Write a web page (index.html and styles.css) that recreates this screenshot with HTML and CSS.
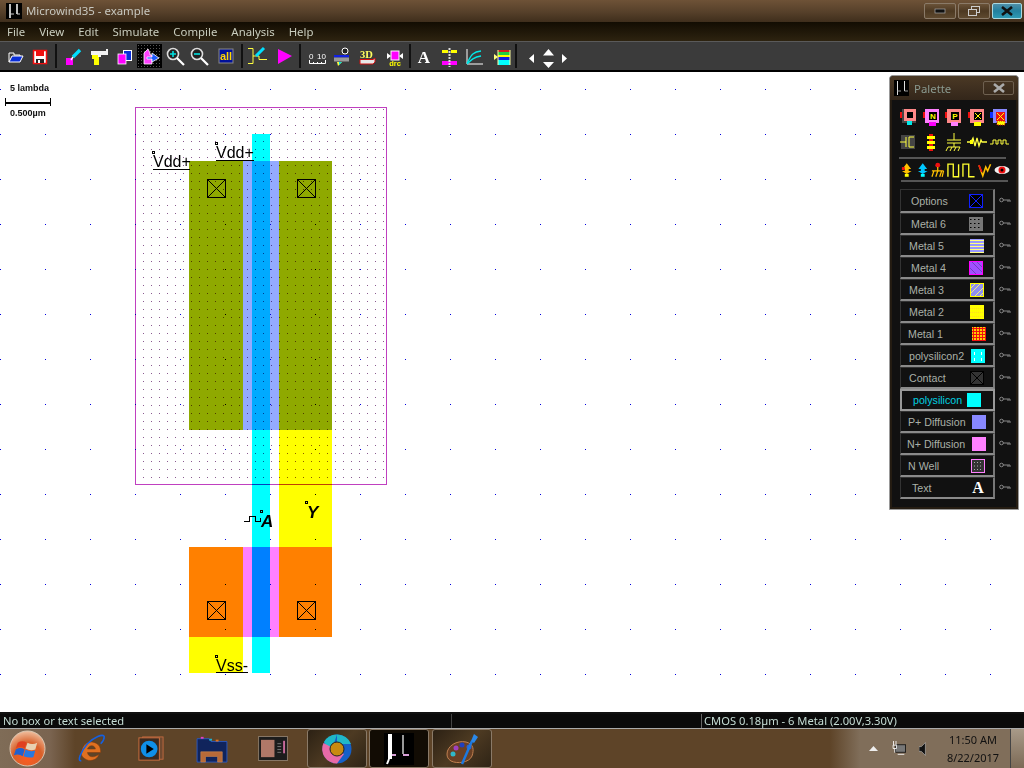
FILE: index.html
```html
<!DOCTYPE html>
<html lang="en">
<head>
<meta charset="utf-8">
<title>Microwind35 - example</title>
<link rel="stylesheet" href="styles.css">
</head>
<body>
<div class="app">
  <header class="titlebar">
    <svg class="mu" width="16" height="16" viewBox="0 0 16 16"><rect width="16" height="16" fill="#000"/><path d="M4 1V15M11 1V11" stroke="#fff" stroke-width="1.5" fill="none"/><path d="M4 11H8M11 11H14" stroke="#ccc" fill="none"/></svg>
    <span class="title-text">Microwind35 - example</span>
    <div class="winbtns">
      <span class="winbtn min"><svg width="12" height="6" viewBox="0 0 12 6"><rect x="1" y="1" width="10" height="4" fill="#111" stroke="#aaa" stroke-width=".7"/></svg></span>
      <span class="winbtn max"><svg width="14" height="12" viewBox="0 0 14 12"><rect x="4.5" y="1.5" width="8" height="6" fill="none" stroke="#ccc"/><rect x="1.5" y="4.5" width="8" height="6" fill="#5a452d" stroke="#ccc"/></svg></span>
      <span class="winbtn close"><svg width="14" height="10" viewBox="0 0 14 10"><path d="M2 1L12 9M12 1L2 9" stroke="#111" stroke-width="2.6"/></svg></span>
    </div>
  </header>
  <nav class="menubar">
    <span>File</span><span>View</span><span>Edit</span><span>Simulate</span><span>Compile</span><span>Analysis</span><span>Help</span>
  </nav>
  <div class="toolbar">
    <span class="tool"><svg viewBox="0 0 24 24"><path d="M6 11V18H17L20 12H9L6 18" fill="#0a2fd8" stroke="#fff"/><path d="M6 11V9H11V11H17V12" fill="none" stroke="#fff"/></svg></span>
    <span class="tool"><svg viewBox="0 0 24 24"><rect x="5.5" y="6.5" width="13" height="13" fill="#fff" stroke="#f01010" stroke-width="1.5"/><rect x="8" y="7" width="8" height="5" fill="#f01010"/><rect x="8" y="15" width="8" height="4" fill="#222"/><rect x="10" y="16" width="2" height="3" fill="#fff"/></svg></span>
    <i class="sep"></i>
    <span class="tool"><svg viewBox="0 0 24 24"><rect x="5" y="14" width="7" height="7" fill="#ff00ff"/><path d="M12 13L19 6" stroke="#00e0ff" stroke-width="3.4"/><path d="M10 16L12 13" stroke="#fff" stroke-width="1.4"/></svg></span>
    <span class="tool"><svg viewBox="0 0 24 24"><path d="M5 7H20V5H22V11H15V13H12V11H5Z" fill="#f2f2f2"/><path d="M6 11H12V13H13V21H8V15H6Z" fill="#ffff00"/></svg></span>
    <span class="tool"><svg viewBox="0 0 24 24"><rect x="11.5" y="6.5" width="8" height="10" fill="#0a2fd8" stroke="#fff"/><rect x="6" y="10" width="8" height="10" fill="#ff00ff" stroke="#fff" stroke-width=".8"/></svg></span>
    <span class="tool active"><svg viewBox="0 0 24 24"><path d="M7 20V9L11 5L13 9V11H15V20Z" fill="#ff40ff" stroke="#fff" stroke-width=".8"/><path d="M10 13H15V9L22 14L15 18V15H10Z" fill="#1f5bff" stroke="#fff" stroke-width=".8"/></svg></span>
    <span class="tool"><svg viewBox="0 0 24 24"><circle cx="10" cy="10" r="5.5" fill="#222" stroke="#ddd" stroke-width="1.6"/><path d="M7 10H13M10 7V13" stroke="#00e0e0" stroke-width="1.6"/><path d="M14 14L21 21" stroke="#fff" stroke-width="2.2"/></svg></span>
    <span class="tool"><svg viewBox="0 0 24 24"><circle cx="9" cy="10" r="5.5" fill="#222" stroke="#ddd" stroke-width="1.6"/><path d="M6 10H12" stroke="#00e0e0" stroke-width="1.6"/><path d="M13 14L20 21" stroke="#fff" stroke-width="2.2"/></svg></span>
    <span class="tool"><svg viewBox="0 0 24 24"><rect x="5" y="5" width="14" height="14" fill="#00109a" stroke="#888"/><text x="12" y="16" class="all">all</text></svg></span>
    <i class="sep"></i>
    <span class="tool"><svg viewBox="0 0 24 24"><path d="M2 4.5H7V19.5H2M7 12H13V15.5H21" stroke="#ffff40" fill="none"/><path d="M10 12L18 4" stroke="#00e0ff" stroke-width="3"/></svg></span>
    <span class="tool"><svg viewBox="0 0 24 24"><path d="M6 5L20 12L6 20Z" fill="#ff00ff"/></svg></span>
    <i class="sep wide"></i>
    <span class="tool"><svg viewBox="0 0 24 24"><text x="3" y="15" class="ruler">0</text><text x="11" y="15" class="ruler">10</text><path d="M3.5 16V19.5H19.5V16M7.500 18V19.500M11.500 18V19.500M15.500 18V19.500" stroke="#fff" fill="none"/></svg></span>
    <span class="tool"><svg viewBox="0 0 24 24"><circle cx="14" cy="7" r="3" fill="#222" stroke="#fff"/><rect x="3" y="11" width="15" height="2.500" fill="#1020e0"/><rect x="3" y="13.500" width="15" height="4" fill="#999"/><path d="M6 18H11L7 22Z" fill="#ffff40"/><path d="M8 18H11L8 21Z" fill="#00e0e0"/></svg></span>
    <span class="tool"><svg viewBox="0 0 24 24"><text x="3" y="14" class="td">3D</text><path d="M3 15.500H16L18 14V18L16 20H3Z" fill="#e8e8e8" stroke="#d01010"/></svg></span>
    <span class="tool"><svg viewBox="0 0 24 24"><rect x="9" y="7" width="8" height="9" fill="#ff00ff" stroke="#fff"/><path d="M5 9L9 12L5 15ZM21 9L17 12L21 15Z" fill="#fff"/><text x="13" y="22" class="drc">drc</text></svg></span>
    <i class="sep flush"></i>
    <span class="tool"><svg viewBox="0 0 24 24"><text x="12" y="19" class="big-a">A</text></svg></span>
    <span class="tool"><svg viewBox="0 0 24 24"><rect x="5" y="6" width="6" height="3" fill="#ffff00"/><rect x="14" y="6" width="6" height="3" fill="#ffff00"/><rect x="5" y="17" width="15" height="4" fill="#ff00ff"/><path d="M12.5 4V23" stroke="#ddd" stroke-width="2" stroke-dasharray="2 1"/></svg></span>
    <span class="tool"><svg viewBox="0 0 24 24"><path d="M4 5V20H20" stroke="#fff" fill="none"/><path d="M4 19C8 12 9 8 18 7M4 20C8 16 11 13 18 12" stroke="#00e8e8" fill="none" stroke-width="1.3"/></svg></span>
    <span class="tool"><svg viewBox="0 0 24 24"><path d="M6 10L10 13L6 16Z" fill="#ffff80"/><rect x="10" y="6" width="12" height="2" fill="#d02020"/><rect x="10" y="8" width="12" height="3" fill="#20d040"/><rect x="10" y="11" width="12" height="2" fill="#ffff00"/><rect x="10" y="13" width="12" height="3" fill="#1020e0"/><rect x="10" y="16" width="12" height="5" fill="#00ffff"/><path d="M10 6V21M22 6V21" stroke="#ffffa0"/></svg></span>
    <i class="sep"></i>
    <span class="nav-arrows"><svg width="48" height="24" viewBox="0 0 48 24"><path d="M10 10V19L5 14.500ZM38 10L43 14.500L38 19ZM24.500 5L30 11.500H19ZM19 18H30L24.500 24Z" fill="#fff"/></svg></span>
  </div>

  <main class="canvas">
    <svg class="layout" width="1024" height="640" viewBox="0 72 1024 640">
      <defs>
        <pattern id="grid" x="0" y="89" width="45" height="45" patternUnits="userSpaceOnUse"><rect width="1" height="1" fill="#0000e0"/></pattern>
        <pattern id="well" x="7" y="5" width="8" height="8" patternUnits="userSpaceOnUse"><rect width="1" height="1" fill="#8a5a90"/></pattern>
        <g id="contact"><rect x=".5" y=".5" width="18" height="18" fill="none" stroke="#000"/><path d="M.5 .5L18.500 18.500M18.500 .5L.5 18.500" stroke="#000" stroke-width="1"/></g>
      </defs>
      <rect x="189" y="161" width="54" height="269" class="pdiff"/>
      <rect x="279" y="161" width="53" height="269" class="pdiff"/>
      <rect x="243" y="161" width="36" height="269" class="lav"/>
      <rect x="279" y="430" width="53" height="117" class="metal"/>
      <rect x="252" y="134" width="18" height="539" class="poly"/>
      <rect x="252" y="161" width="18" height="269" class="gate-p"/>
      <rect x="189" y="547" width="54" height="90" class="ndiff"/>
      <rect x="279" y="547" width="53" height="90" class="ndiff"/>
      <rect x="243" y="547" width="36" height="90" class="pink"/>
      <rect x="252" y="547" width="18" height="90" class="gate-n"/>
      <rect x="189" y="637" width="54" height="36" class="metal"/>
      <rect x="0" y="72" width="1024" height="640" fill="url(#grid)" class="mul"/>
      <rect x="136" y="108" width="250" height="376" fill="url(#well)" class="mul"/>
      <rect x="135.500" y="107.500" width="251" height="377" class="well-edge"/>
      <use href="#contact" x="207" y="179"/><use href="#contact" x="297" y="179"/>
      <use href="#contact" x="207" y="601"/><use href="#contact" x="297" y="601"/>

      <g class="scale">
        <text x="10" y="91" class="scale-text">5 lambda</text>
        <path d="M5.500 98V106M50.500 98V106" class="ink"/>
        <rect x="5" y="102" width="46" height="2" class="solid"/>
        <text x="10" y="116" class="scale-text">0.500µm</text>
      </g>

      <rect x="152.500" y="151.500" width="2" height="2" class="pin"/>
      <text x="153" y="167" class="label">Vdd+</text><path d="M153 169.500H190" class="ink"/>
      <rect x="215.500" y="142.500" width="2" height="2" class="pin"/>
      <text x="216" y="158" class="label">Vdd+</text><path d="M216 160.500H254" class="ink"/>
      <rect x="215.500" y="655.500" width="2" height="2" class="pin"/>
      <text x="216" y="671" class="label">Vss-</text><path d="M216 672.500H248" class="ink"/>
      <rect x="260.500" y="510.500" width="2" height="2" class="pin"/>
      <path d="M244 521.500H249V516.500H255V521.500H260V518" class="ink"/>
      <text x="261" y="527" class="label-bi">A</text>
      <rect x="305.500" y="501.500" width="2" height="2" class="pin"/>
      <text x="307" y="518" class="label-bi">Y</text>
    </svg>

    <aside class="palette">
      <div class="pal-title">
        <svg class="pal-mu" width="15" height="16" viewBox="0 0 15 16"><rect width="15" height="16" fill="#000"/><path d="M3.500 1V15M10.500 1V11" stroke="#ddd" fill="none"/><path d="M3.500 11H7M10.500 11H14" stroke="#999" fill="none"/></svg>
        <span>Palette</span>
        <span class="pal-close"><svg width="14" height="10" viewBox="0 0 14 10"><path d="M2 1L12 9M12 1L2 9" stroke="#aaa" stroke-width="2.600"/></svg></span>
      </div>
      <div class="pal-icons">
        <svg viewBox="0 0 20 20"><rect x="0" y="4" width="4" height="6" fill="#f01010"/><rect x="2" y="1" width="14" height="14" fill="#444"/><rect x="4" y="1" width="12" height="12" fill="#ff8888"/><rect x="7" y="4" width="6" height="6" fill="#000"/><rect x="7" y="13" width="5" height="4" fill="#00e8e8"/></svg>
        <svg viewBox="0 0 20 20"><rect x="0" y="4" width="4" height="6" fill="#f01010"/><rect x="2" y="1" width="14" height="14" fill="#ff80ff"/><rect x="6" y="4" width="8" height="8" fill="#000"/><text x="10" y="11" class="pt">N</text><rect x="6" y="14" width="7" height="4" fill="#ff00ff"/></svg>
        <svg viewBox="0 0 20 20"><rect x="0" y="4" width="4" height="6" fill="#f01010"/><rect x="2" y="1" width="14" height="14" fill="#ff8888"/><rect x="6" y="4" width="8" height="8" fill="#000"/><text x="10" y="11" class="pt">P</text><rect x="6" y="14" width="7" height="4" fill="#ff80ff"/></svg>
        <svg viewBox="0 0 20 20"><rect x="0" y="4" width="4" height="6" fill="#f01010"/><rect x="2" y="1" width="14" height="14" fill="#ff8888"/><rect x="6" y="4" width="8" height="8" fill="#000"/><path d="M7 5L13 11M13 5L7 11" stroke="#ff0"/><rect x="6" y="14" width="7" height="4" fill="#ffff00"/></svg>
        <svg viewBox="0 0 20 20"><rect x="0" y="4" width="5" height="6" fill="#1030ff"/><rect x="3" y="1" width="14" height="14" fill="#8888ff"/><rect x="6" y="4" width="9" height="9" fill="#f01010"/><path d="M7 5L14 12M14 5L7 12" stroke="#ff0"/><rect x="7" y="13" width="8" height="4" fill="#ff0" stroke="#e01010" stroke-dasharray="1 1"/></svg>
      </div>
      <div class="pal-icons second">
        <svg viewBox="0 0 20 20"><rect x="2" y="3" width="14" height="14" fill="#444"/><path d="M1 10H7M7 5V15M10 5V15M10 5H15M10 15H15" stroke="#ffff40" fill="none"/></svg>
        <svg viewBox="0 0 20 20"><rect x="7" y="2" width="4" height="2" fill="#f01010"/><rect x="5" y="4" width="8" height="3" fill="#ffff00"/><rect x="7" y="7" width="4" height="2" fill="#f01010"/><rect x="5" y="9" width="8" height="3" fill="#ffff00"/><rect x="7" y="12" width="4" height="2" fill="#f01010"/><rect x="5" y="14" width="8" height="3" fill="#ffff00"/><rect x="7" y="17" width="4" height="2" fill="#f01010"/></svg>
        <svg viewBox="0 0 20 20"><path d="M10 1V8M3 8H17M3 11H17M10 11V15M4 15H16M4 15L2 19M8 15L6 19M12 15L10 19M16 15L14 19" stroke="#ffff40" fill="none"/></svg>
        <svg viewBox="0 0 20 20"><path d="M0 10H4L6 6L8 14L10 6L12 14L14 8L15 10H20" stroke="#ffff40" fill="none" stroke-width="1.300"/><rect x="3" y="8" width="3" height="4" fill="#ff0"/></svg>
        <svg viewBox="0 0 20 20"><path d="M1 12H4V8H7V12H9V8H12V12H14V8H17V12H20" stroke="#ffff40" fill="none"/></svg>
      </div>
      <hr class="pal-sep">
      <div class="pal-icons third">
        <svg viewBox="0 0 16 16"><path d="M8 1L12.500 7H10V9H13L8 12L3 9H6V7H3.500Z" fill="#ffc000"/><rect x="3" y="5" width="3" height="3" fill="#f01010"/><rect x="6" y="12" width="4" height="3" fill="#ffff00"/></svg>
        <svg viewBox="0 0 16 16"><path d="M8 1L12.500 7H10V9H13L8 12L3 9H6V7H3.500Z" fill="#00c8ff"/><rect x="6" y="12" width="4" height="3" fill="#00ffff"/></svg>
        <svg viewBox="0 0 16 16"><circle cx="8" cy="3" r="2.500" fill="#f01010"/><path d="M8 5V10M2 9H14M4 9L2 15M8 9L6 15M12 9L10 15M14 9L12.500 15" stroke="#ffc000" fill="none" stroke-width="1.300"/></svg>
        <svg viewBox="0 0 16 16"><path d="M2 15V2H7.500V15H13V2" stroke="#ffff30" fill="none" stroke-width="1.400"/></svg>
        <svg viewBox="0 0 16 16"><path d="M2 15V2H8V15H14" stroke="#ffff30" fill="none" stroke-width="1.400"/></svg>
        <svg viewBox="0 0 16 16"><path d="M2 3L6 14L9 5L11 9L14 2" stroke="#ffc000" fill="none" stroke-width="1.600"/><path d="M2 3L5 10" stroke="#f01010" stroke-width="1.600"/></svg>
        <svg class="eye" viewBox="0 0 16 16"><ellipse cx="8" cy="8" rx="7.500" ry="4" fill="#eee"/><circle cx="8" cy="8" r="3.500" fill="#f01010"/><circle cx="8" cy="8" r="1.500" fill="#000"/></svg>
      </div>
      <hr class="pal-sep low">
      <ul class="layers">
        <li class="layer first"><div class="btn"><span class="nm in-b">Options</span><svg class="sw" viewBox="0 0 14 14"><rect x=".5" y=".5" width="13" height="13" fill="#000" stroke="#1020ff"/><path d="M0 0L14 14M14 0L0 14" stroke="#1020ff"/></svg></div><svg class="key" viewBox="0 0 12 6"><circle cx="2.500" cy="3" r="1.800" fill="none" stroke="#888"/><path d="M4 3H11M9 3V5M11 3V5" stroke="#888" fill="none"/></svg></li>
        <li class="layer"><div class="btn"><span class="nm in-b">Metal 6</span><svg class="sw" viewBox="0 0 14 14"><rect width="14" height="14" fill="#777"/><path d="M1 2.500H13M1 6.500H13M1 10.500H13" stroke="#000" stroke-dasharray="1.500 2.500"/></svg></div><svg class="key" viewBox="0 0 12 6"><circle cx="2.500" cy="3" r="1.800" fill="none" stroke="#888"/><path d="M4 3H11M9 3V5M11 3V5" stroke="#888" fill="none"/></svg></li>
        <li class="layer"><div class="btn"><span class="nm">Metal 5</span><svg class="sw s1" viewBox="0 0 14 14"><rect width="14" height="14" fill="#9898ff"/><path d="M0 1.500H14M0 4.500H14M0 7.500H14M0 10.500H14M0 13.500H14" stroke="#ffff80"/></svg></div><svg class="key" viewBox="0 0 12 6"><circle cx="2.500" cy="3" r="1.800" fill="none" stroke="#888"/><path d="M4 3H11M9 3V5M11 3V5" stroke="#888" fill="none"/></svg></li>
        <li class="layer"><div class="btn"><span class="nm in-b">Metal 4</span><svg class="sw" viewBox="0 0 14 14"><rect width="14" height="14" fill="#a050ff"/><path d="M-2 4L10 16M2 0L14 12M7 0L14 7" stroke="#7040c0"/><rect x=".5" y=".5" width="13" height="13" fill="none" stroke="#ff00ff"/></svg></div><svg class="key" viewBox="0 0 12 6"><circle cx="2.500" cy="3" r="1.800" fill="none" stroke="#888"/><path d="M4 3H11M9 3V5M11 3V5" stroke="#888" fill="none"/></svg></li>
        <li class="layer"><div class="btn"><span class="nm">Metal 3</span><svg class="sw s1" viewBox="0 0 14 14"><rect width="14" height="14" fill="#9090f0"/><path d="M0 6L6 0M0 11L11 0M4 14L14 4M9 14L14 9" stroke="#f0f080"/><rect x=".5" y=".5" width="13" height="13" fill="none" stroke="#ffff00"/></svg></div><svg class="key" viewBox="0 0 12 6"><circle cx="2.500" cy="3" r="1.800" fill="none" stroke="#888"/><path d="M4 3H11M9 3V5M11 3V5" stroke="#888" fill="none"/></svg></li>
        <li class="layer"><div class="btn"><span class="nm">Metal 2</span><svg class="sw s1" viewBox="0 0 14 14"><rect width="14" height="14" fill="#ffff00"/><path d="M0 3.500H14M0 7.500H14M0 11.500H14" stroke="#ffc040" stroke-dasharray="1 1" stroke-width=".6"/></svg></div><svg class="key" viewBox="0 0 12 6"><circle cx="2.500" cy="3" r="1.800" fill="none" stroke="#888"/><path d="M4 3H11M9 3V5M11 3V5" stroke="#888" fill="none"/></svg></li>
        <li class="layer"><div class="btn"><span class="nm in-a">Metal 1</span><svg class="sw s3" viewBox="0 0 14 14"><rect width="14" height="14" fill="#ffd000"/><path d="M0 1.500H14M0 4.500H14M0 7.500H14M0 10.500H14M0 13.500H14M1.500 0V14M4.500 0V14M7.500 0V14M10.500 0V14M13.500 0V14" stroke="#f01010"/></svg></div><svg class="key" viewBox="0 0 12 6"><circle cx="2.500" cy="3" r="1.800" fill="none" stroke="#888"/><path d="M4 3H11M9 3V5M11 3V5" stroke="#888" fill="none"/></svg></li>
        <li class="layer"><div class="btn"><span class="nm">polysilicon2</span><svg class="sw s2" viewBox="0 0 14 14"><rect width="14" height="14" fill="#00ffff"/><path d="M3.500 3V6M10.500 3V6M3.500 9V12M10.500 9V12" stroke="#fff"/></svg></div><svg class="key" viewBox="0 0 12 6"><circle cx="2.500" cy="3" r="1.800" fill="none" stroke="#888"/><path d="M4 3H11M9 3V5M11 3V5" stroke="#888" fill="none"/></svg></li>
        <li class="layer"><div class="btn"><span class="nm">Contact</span><svg class="sw s1" viewBox="0 0 14 14"><rect x=".5" y=".5" width="13" height="13" fill="#333" stroke="#000"/><path d="M0 0L14 14M14 0L0 14" stroke="#000"/></svg></div><svg class="key" viewBox="0 0 12 6"><circle cx="2.500" cy="3" r="1.800" fill="none" stroke="#888"/><path d="M4 3H11M9 3V5M11 3V5" stroke="#888" fill="none"/></svg></li>
        <li class="layer"><div class="btn selected"><span class="nm">polysilicon</span><svg class="sw s0" viewBox="0 0 14 14"><rect width="14" height="14" fill="#00ffff"/></svg></div><svg class="key" viewBox="0 0 12 6"><circle cx="2.500" cy="3" r="1.800" fill="none" stroke="#888"/><path d="M4 3H11M9 3V5M11 3V5" stroke="#888" fill="none"/></svg></li>
        <li class="layer"><div class="btn"><span class="nm in-a">P+ Diffusion</span><svg class="sw s3" viewBox="0 0 14 14"><rect width="14" height="14" fill="#8888ff"/></svg></div><svg class="key" viewBox="0 0 12 6"><circle cx="2.500" cy="3" r="1.800" fill="none" stroke="#888"/><path d="M4 3H11M9 3V5M11 3V5" stroke="#888" fill="none"/></svg></li>
        <li class="layer"><div class="btn"><span class="nm in-z">N+ Diffusion</span><svg class="sw s3" viewBox="0 0 14 14"><rect width="14" height="14" fill="#ff80ff"/></svg></div><svg class="key" viewBox="0 0 12 6"><circle cx="2.500" cy="3" r="1.800" fill="none" stroke="#888"/><path d="M4 3H11M9 3V5M11 3V5" stroke="#888" fill="none"/></svg></li>
        <li class="layer"><div class="btn"><span class="nm in-a">N Well</span><svg class="sw s2" viewBox="0 0 14 14"><rect x=".5" y=".5" width="13" height="13" fill="#333" stroke="#ff80ff"/><path d="M3 3.500H12M3 7H12M3 10.500H12" stroke="#aaa" stroke-dasharray="1 2"/></svg></div><svg class="key" viewBox="0 0 12 6"><circle cx="2.500" cy="3" r="1.800" fill="none" stroke="#888"/><path d="M4 3H11M9 3V5M11 3V5" stroke="#888" fill="none"/></svg></li>
        <li class="layer"><div class="btn"><span class="nm in-c">Text</span><span class="sw s2 text-a">A</span></div><svg class="key" viewBox="0 0 12 6"><circle cx="2.500" cy="3" r="1.800" fill="none" stroke="#888"/><path d="M4 3H11M9 3V5M11 3V5" stroke="#888" fill="none"/></svg></li>
      </ul>
    </aside>
  </main>

  <footer class="statusbar">
    <div class="field f1">No box or text selected</div>
    <div class="field f2"></div>
    <div class="field f3">CMOS 0.18µm - 6 Metal (2.00V,3.30V)</div>
  </footer>

  <div class="taskbar">
    <span class="orb">
      <svg width="37" height="37" viewBox="0 0 38 38"><defs><radialGradient id="orbg" cx=".5" cy=".75" r=".75"><stop offset="0" stop-color="#ff5a20"/><stop offset=".55" stop-color="#d8602a"/><stop offset="1" stop-color="#f0c0a0"/></radialGradient></defs><circle cx="19" cy="19" r="18" fill="url(#orbg)" stroke="#d9c6b2"/><path d="M9 13Q14 10 18 13L16 19Q12 16 7 19Z" fill="#e04020"/><path d="M19 13Q24 16 29 13L27 20Q22 22 17 19Z" fill="#e8d0b0"/><path d="M7 20Q12 17 16 20L14 27Q10 24 5 26Z" fill="#2060d0"/><path d="M17 20Q22 23 27 21L25 28Q20 29 15 27Z" fill="#2a78e0"/></svg>
    </span>
    <span class="task ie"><svg width="30" height="30" viewBox="0 0 32 34"><path d="M5 22C6 9 17 6 24 12C27 15 27 19 27 21H12C13 27 20 27 25 23C23 30 14 32 9 28C6 26 5 24 5 22ZM12 17H21C20 12 14 12 12 17Z" fill="#e07020" stroke="#7a3810" stroke-width=".6"/><path d="M5 30C0 32 4 20 12 11C19 4 30 -1 31 3C31 6 29 9 27 11" fill="none" stroke="#1560e0" stroke-width="1.800"/></svg></span>
    <span class="task wmp"><svg width="30" height="26" viewBox="0 0 32 28"><rect x="7" y="1" width="22" height="24" fill="#704a30" stroke="#c06a40"/><rect x="3" y="2" width="22" height="24" fill="#3a2a20" stroke="#d07040"/><circle cx="14" cy="14" r="9" fill="#0f8fe8"/><path d="M11 9L19 14L11 19Z" fill="#000"/></svg></span>
    <span class="task folder"><svg width="32" height="28" viewBox="0 0 34 30"><path d="M1 4H14L16 7H33V29H1Z" fill="#10245c" stroke="#2a58c0"/><rect x="5" y="2" width="3" height="2" fill="#e040c0"/><rect x="14" y="4" width="3" height="2" fill="#20b0d0"/><rect x="21" y="5" width="3" height="2" fill="#e07020"/><path d="M5 18H28V29H23V23H10V29H5Z" fill="#b86a38" stroke="#d08a50" stroke-width=".6"/></svg></span>
    <span class="task window"><svg width="31" height="25" viewBox="0 0 32 26"><rect x=".5" y=".5" width="30" height="25" fill="#1c1c1c" stroke="#8a7a68"/><rect x="3" y="4" width="14" height="18" fill="#b07868"/><rect x="26" y="5" width="2" height="13" fill="#c86a9a"/><path d="M20 8H24M20 11H24M20 14H24M20 17H24" stroke="#777"/></svg></span>
    <span class="task lit chrome-btn"><svg width="30" height="30" viewBox="0 0 30 30"><circle cx="15" cy="15" r="14.500" fill="#1560c8"/><path d="M15 .5A14.500 14.500 0 0 0 2 8L9 18Z" fill="#20b8c8"/><path d="M15 .5A14.500 14.500 0 0 1 29 10H15Z" fill="#20b8c8"/><path d="M1.500 9A14.500 14.500 0 0 0 15 29.500L22 20Z" fill="#e86aa8"/><circle cx="15" cy="15" r="7" fill="#c88a10" stroke="#222"/></svg></span>
    <span class="task lit mu-btn"><svg width="30" height="32" viewBox="0 0 30 32"><rect width="30" height="32" fill="#000"/><path d="M4 1H8V26H4Z" fill="#fff"/><path d="M3 31L5 26" stroke="#fff" stroke-width="2"/><path d="M19 2V21" stroke="#999" stroke-width="2"/><path d="M8 22H12M19 22H25" stroke="#d8a0d8" stroke-width="2"/></svg></span>
    <span class="task lit paint-btn"><svg width="34" height="34" viewBox="0 0 34 34"><path d="M2 22C2 14 12 8 21 10C29 12 29 18 27 24C24 31 12 32 6 29C3 27 2 25 2 22Z" fill="#6a4024" stroke="#c08050"/><circle cx="8" cy="22" r="2.500" fill="#30b8c8"/><circle cx="11" cy="16" r="2.500" fill="#a040c0"/><circle cx="17" cy="13" r="2.500" fill="#2040c0"/><circle cx="24" cy="15" r="2.500" fill="#3060d0"/><path d="M17 32L27 9" stroke="#1c78e0" stroke-width="2.500"/><path d="M26 9L29 2L33 5L29 11Z" fill="#2a88e8"/></svg></span>
    <div class="tray">
      <svg class="tray-up" width="9" height="5" viewBox="0 0 9 5"><path d="M0 5L4.500 0L9 5Z" fill="#eee"/></svg>
      <svg class="tray-net" width="15" height="15" viewBox="0 0 18 18"><rect x="5.500" y="4.500" width="12" height="9" fill="#777" stroke="#111"/><path d="M3 0V5M6 0V5M2.500 5H6.500V9H2.500ZM4.500 9V14M8 16H16" stroke="#fff" fill="none"/></svg>
      <svg class="tray-vol" width="8" height="14" viewBox="0 0 10 16"><path d="M0 5H3L8 0V16L3 11H0Z" fill="#111" stroke="#ddd" stroke-width=".6"/></svg>
      <div class="clock"><span>11:50 AM</span><span>8/22/2017</span></div>
      <span class="show-desktop"></span>
    </div>
  </div>
</div>
</body>
</html>
```

FILE: styles.css
```css
* { box-sizing: border-box; }
html, body { margin: 0; padding: 0; }
body { font-family: "Noto Sans", "Liberation Sans", sans-serif; background: #fff; overflow: hidden; }
.app { width: 1024px; height: 768px; display: flex; flex-direction: column; }

.titlebar { height: 22px; flex: none; display: flex; align-items: center; padding-left: 6px; background: linear-gradient(#6e5237, #56402a 55%, #3f2e1c); color: #c8c8c0; font-size: 11.400px; }
.mu { flex: none; }
.title-text { margin-left: 4px; padding-bottom: 2px; }
.winbtns { margin-left: auto; display: flex; gap: 2px; padding-right: 2px; align-self: flex-start; padding-top: 3px; }
.winbtn { width: 32px; height: 16px; border: 1px solid #8a7a68; border-radius: 2px; display: flex; align-items: center; justify-content: center; background: linear-gradient(#6a5238, #4d3922 50%, #5e492f); }
.winbtn.close { width: 30px; background: linear-gradient(#4f8fa8, #22809e 50%, #2e9ab4); border-color: #a8d8e0; }

.menubar { height: 19px; flex: none; display: flex; align-items: center; background: linear-gradient(#120c02, #2d2310); color: #c9cdbe; font-size: 11.400px; padding-left: 7px; gap: 14px; }

.toolbar { height: 31px; flex: none; display: flex; align-items: center; padding-left: 2px; background: #3b3b3b; border-top: 1px solid #5a5a5a; border-bottom: 2px solid #000; }
.tool { width: 25.500px; height: 24px; flex: none; display: block; }
.tool svg { display: block; width: 24px; height: 24px; margin: 0 .75px; }
.tool.active { background: #000; background-image: radial-gradient(#555 .5px, transparent 1px); background-size: 3px 3px; }
.sep { width: 2px; height: 24px; flex: none; background: #111; margin: 0 3px 0 2px; }
.sep.wide { margin: 0 4.500px 0 2px; }
.sep.flush { margin: 0 0 0 2px; }
.nav-arrows { margin-left: 4px; height: 24px; flex: none; }
.all { font: bold 11px "Liberation Sans", sans-serif; fill: #ffd800; text-anchor: middle; }
.ruler { font: 8px "Liberation Sans", sans-serif; fill: #fff; }
.td { font: bold 10.500px "Liberation Serif", serif; fill: #ffff60; }
.drc { font: bold 7.500px "Liberation Sans", sans-serif; fill: #ffff00; text-anchor: middle; }
.big-a { font: bold 17px "Liberation Serif", serif; fill: #fff; text-anchor: middle; }

.canvas { flex: 1; position: relative; background: #fff; overflow: hidden; }
.layout { display: block; shape-rendering: crispEdges; }
.pdiff { fill: #8fa900; }
.lav { fill: #94aaff; }
.metal { fill: #ffff00; }
.poly { fill: #00ffff; }
.gate-p { fill: #00aaff; }
.ndiff { fill: #ff8000; }
.pink { fill: #ff80ff; }
.gate-n { fill: #0080ff; }
.mul { mix-blend-mode: multiply; }
.well-edge { fill: none; stroke: #c040c0; mix-blend-mode: multiply; }
.ink { fill: none; stroke: #000; }
.solid { fill: #000; }
.pin { fill: none; stroke: #000; }
.scale-text { font: bold 9px "Liberation Sans", sans-serif; fill: #111; }
.label { font: 16px "Liberation Sans", sans-serif; fill: #000; }
.label-bi { font: italic bold 17px "Liberation Sans", sans-serif; fill: #000; }

.palette { position: absolute; left: 889px; top: 3px; width: 130px; height: 435px; background: #111; border: 1px solid #999; border-radius: 4px 4px 0 0; box-shadow: inset 0 0 0 2px #241c12; display: flex; flex-direction: column; align-items: flex-start; padding-left: 10px; }
.pal-title { height: 24px; width: calc(100% + 10px); margin-left: -10px; flex: none; display: flex; align-items: center; padding: 0 4px; background: linear-gradient(#4b3925, #33261a); color: #8a9a90; font-size: 11.400px; border-radius: 4px 4px 0 0; }
.pal-mu { flex: none; }
.pal-title span:not(.pal-close) { margin-left: 5px; }
.pal-close { margin-left: auto; width: 31px; height: 14px; border: 1px solid #6e6050; border-radius: 2px; display: flex; align-items: center; justify-content: center; }
.pal-icons { display: flex; gap: 2.500px; height: 20px; margin: 8px 0 0 0; flex: none; }
.pal-icons svg { width: 20px; height: 20px; flex: none; }
.pal-icons.second { margin: 4px 0 0 -1px; }
.pal-icons.third { margin: 3px 0 0 -1px; height: 16px; gap: 0; }
.pal-icons.third svg { width: 15.500px; height: 16px; }
.pal-icons.third .eye { width: 16px; margin-left: 2px; }
.pal-sep { width: 107px; height: 2px; margin: 5px 0 0 -1px; border: 0; background: #555; flex: none; }
.pal-sep.low { margin: 2px 0 0 1px; }
.layers { list-style: none; margin: 7px 0 0; padding: 0; }
.layer { display: flex; align-items: center; height: 22px; width: 112px; }
.layer.first { height: 24px; }
.btn { width: 95px; height: 100%; flex: none; display: flex; align-items: center; background: #111; border-top: 1px solid #333; border-left: 1px solid #333; border-right: 2px solid #777; border-bottom: 2px solid #8a8a8a; color: #aab0a8; font: 10.670px "Liberation Sans", sans-serif; padding-left: 8px; }
.btn.selected { border: 2px solid #999; color: #00d0e0; padding-left: 11px; }
.nm { white-space: nowrap; }
.in-a { margin-left: -1px; }
.in-z { margin-left: -2px; }
.in-b { margin-left: 2px; }
.in-c { margin-left: 3px; }
.sw { width: 14px; height: 14px; margin-left: auto; margin-right: 10px; flex: none; display: block; }
.sw.s0 { margin-right: 12px; }
.sw.s1 { margin-right: 9px; }
.sw.s2 { margin-right: 8px; }
.sw.s3 { margin-right: 7px; }
.text-a { font: bold 16px "Liberation Serif", serif; color: #fff; line-height: 14px; text-align: center; }
.key { width: 12px; height: 6px; margin: 0 0 3px 4px; flex: none; }
.pt { font: bold 8px "Liberation Sans", sans-serif; fill: #ffff00; text-anchor: middle; }

.statusbar { height: 17px; flex: none; display: flex; background: #0a0a0a; border-top: 2px solid #111; border-bottom: 1px solid #aaa; color: #c5ddd5; font-size: 11.200px; line-height: 14px; }
.field { height: 14px; white-space: nowrap; }
.f1 { width: 452px; padding-left: 3px; border-right: 1px solid #444; }
.f2 { width: 250px; border-right: 1px solid #666; }
.f3 { flex: 1; padding-left: 2px; }

.taskbar { height: 39px; flex: none; display: flex; align-items: center; padding-left: 9px; background: linear-gradient(90deg, #7f6c57, #7a6450 50px, #5e4428 75px, #5e4428 830px, #806e5a 860px, #806e5a); }
.orb { width: 37px; height: 37px; flex: none; margin-right: 30px; }
.orb svg, .task svg { display: block; }
.task { flex: none; display: flex; align-items: center; justify-content: center; height: 39px; }
.ie { width: 30px; margin-right: 30px; }
.wmp { width: 30px; margin-right: 30px; }
.folder { width: 32px; margin-right: 30px; }
.task.window { width: 31px; margin-right: 18px; }
.task.lit { width: 60px; border: 1px solid #8a7a68; border-radius: 3px; background: linear-gradient(135deg, #2c2114, #4d3a22 50%, #2f2416); margin-right: 2px; }
.task.lit.mu-btn { background: #120c04; margin-right: 3px; }
.tray { margin-left: auto; display: flex; align-items: center; height: 39px; color: #111; }
.tray-up { margin-right: 13px; }
.tray-net { margin-right: 13px; }
.tray-vol { margin-right: 14px; }
.clock { display: flex; flex-direction: column; align-items: center; width: 64px; font-size: 11px; line-height: 18px; color: #111; margin-right: 5px; padding-top: 1px; }
.show-desktop { width: 14px; height: 39px; background: linear-gradient(#a89a88, #7c6a56); border-left: 1px solid #444; }
```
